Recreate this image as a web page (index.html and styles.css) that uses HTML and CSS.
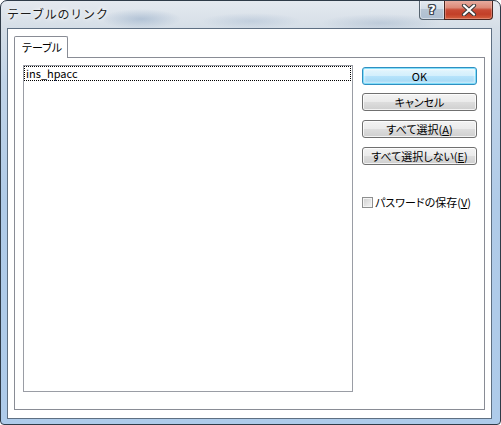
FILE: index.html
```html
<!DOCTYPE html>
<html lang="ja">
<head>
<meta charset="utf-8">
<title>テーブルのリンク</title>
<link rel="stylesheet" href="styles.css">
</head>
<body>
<div class="window">
  <div class="titlebar">
    <span class="title">テーブルのリンク</span>
    <div class="caption-buttons">
      <div class="cap-help"><span class="qmark">?</span></div>
      <div class="cap-close">
        <svg width="16" height="12" viewBox="0 0 16 12">
          <path d="M3 1.5 L13 10.5 M13 1.5 L3 10.5" stroke="#3a3a3a" stroke-width="4.2" stroke-linecap="round" fill="none"/>
          <path d="M3 1.5 L13 10.5 M13 1.5 L3 10.5" stroke="#ffffff" stroke-width="2.2" stroke-linecap="round" fill="none"/>
        </svg>
      </div>
    </div>
  </div>
  <div class="client">
    <div class="tabs"><div class="tab">テーブル</div></div>
    <div class="pane">
      <div class="listbox">
        <div class="item">ins_hpacc</div>
      </div>
      <div class="side">
        <button class="btn default">OK</button>
        <button class="btn cancel">キャンセル</button>
        <button class="btn">すべて選択(<u>A</u>)</button>
        <button class="btn">すべて選択しない(<u>E</u>)</button>
        <label class="check"><span class="box"></span><span class="check-label">パスワードの保存(<u>V</u>)</span></label>
      </div>
    </div>
  </div>
</div>
</body>
</html>
```

FILE: styles.css
```css
html, body {
  margin: 0;
  padding: 0;
  background: #ffffff;
}

body {
  font-family: "Noto Sans CJK JP", "Noto Sans", sans-serif;
  font-size: 11px;
  font-weight: 400;
  font-feature-settings: "palt";
  color: #000;
}

.window {
  width: 501px;
  height: 425px;
  box-sizing: border-box;
  border: 1px solid #2f3b48;
  border-radius: 7px 7px 4px 4px;
  padding: 0 8px 5px 6px;
  display: flex;
  flex-direction: column;
  background:
    radial-gradient(ellipse 40px 10px at 140px 18px, rgba(120,150,185,0.4), rgba(120,150,185,0) 100%),
    radial-gradient(ellipse 50px 8px at 250px 20px, rgba(140,165,195,0.3), rgba(140,165,195,0) 100%),
    radial-gradient(ellipse 60px 9px at 380px 22px, rgba(130,155,185,0.3), rgba(130,155,185,0) 100%),
    linear-gradient(to bottom, #e4e9ef 0px, #d5dee7 27px, #c1d4e8 80px, #b0cbe8 200px, #aecbea 100%);
  overflow: hidden;
}

.titlebar {
  height: 27px;
  display: flex;
  align-items: flex-start;
  justify-content: space-between;
  flex: none;
}

.title {
  padding-top: 5px;
  font-size: 12px;
  font-weight: 400;
  font-feature-settings: normal;
  letter-spacing: 0.8px;
  line-height: 16px;
  color: #1b1b1b;
  text-shadow: 0 0 6px rgba(255,255,255,0.95), 0 0 3px rgba(255,255,255,0.9);
}

.caption-buttons {
  display: flex;
  margin-top: -1px;
  margin-right: -1px;
}

.cap-help {
  width: 25px;
  height: 20px;
  box-sizing: border-box;
  border: 1px solid #56636f;
  border-top: none;
  border-right: none;
  border-radius: 0 0 0 4px;
  background: linear-gradient(to bottom, #e8edf2 0%, #d3dde7 45%, #b7c5d4 50%, #aebed0 100%);
  box-shadow: inset 0 0 0 1px rgba(255,255,255,0.45);
  display: flex;
  align-items: center;
  justify-content: center;
}

.qmark {
  font-family: "DejaVu Sans", sans-serif;
  font-weight: bold;
  font-size: 13px;
  line-height: 13px;
  color: #ffffff;
  text-shadow: -1px 0 #3c4650, 1px 0 #3c4650, 0 -1px #3c4650, 0 1px #3c4650,
    -1px -1px #3c4650, 1px 1px #3c4650, 1px -1px #3c4650, -1px 1px #3c4650;
}

.cap-close {
  width: 49px;
  height: 20px;
  box-sizing: border-box;
  border: 1px solid #4a2620;
  border-top: none;
  border-radius: 0 0 4px 0;
  background: linear-gradient(to bottom, #e9b0a4 0%, #dc8a78 40%, #c84a34 52%, #c23f28 75%, #d4603f 100%);
  box-shadow: inset 0 0 0 1px rgba(255,210,200,0.35);
  display: flex;
  align-items: center;
  justify-content: center;
}

.client {
  flex: 1;
  border: 1px solid #5e6f82;
  background: #ffffff;
  padding: 7px 6px 8px 6px;
  display: flex;
  flex-direction: column;
}

.tabs {
  display: flex;
  height: 21px;
  flex: none;
  position: relative;
  z-index: 1;
}

.tab {
  width: 54px;
  height: 22px;
  box-sizing: border-box;
  border: 1px solid #898c95;
  border-bottom: none;
  background: #ffffff;
  padding: 3px 0 0 7px;
  line-height: 15px;
  border-radius: 2px 2px 0 0;
}

.pane {
  flex: 1;
  border: 1px solid #898c95;
  padding: 7px 7px 17px 8px;
  display: flex;
  gap: 9px;
}

.listbox {
  width: 330px;
  box-sizing: border-box;
  border: 1px solid #9a9da5;
  padding: 0 1px 0 0;
  flex: none;
}

.item {
  height: 15px;
  box-sizing: border-box;
  border: 1px dotted #000;
  padding-left: 1px;
  line-height: 12px;
}

.side {
  width: 115px;
  flex: none;
  display: flex;
  flex-direction: column;
  margin-top: 2px;
}

.btn {
  height: 18px;
  box-sizing: border-box;
  border: 1px solid #707070;
  border-radius: 3px;
  background: linear-gradient(to bottom, #f3f3f3 0%, #ebebeb 48%, #dddddd 52%, #cfcfcf 100%);
  box-shadow: inset 0 0 0 1px rgba(255,255,255,0.75);
  font: inherit;
  line-height: 14px;
  color: #000;
  padding: 0;
  text-align: center;
  margin: 0;
}

.btn + .btn {
  margin-top: 9px;
}

.btn.cancel {
  margin-top: 8px;
}

.btn.default {
  border-color: #2f8fc1;
  background: linear-gradient(to bottom, #e6f6fd 0%, #d3effc 48%, #b6e3fb 52%, #9fd6f3 100%);
  box-shadow: inset 0 0 0 1px rgba(120,220,250,0.9), inset 0 0 2px 2px rgba(255,255,255,0.5);
}

.check {
  display: flex;
  align-items: center;
  margin-top: 31px;
  height: 13px;
}

.box {
  width: 11px;
  height: 11px;
  box-sizing: border-box;
  border: 1px solid #8e8f8f;
  background: linear-gradient(135deg, #cfcfcf 0%, #e6e6e6 60%, #f6f6f6 100%);
  box-shadow: inset 0 0 0 1px #f4f4f4;
  flex: none;
}

.check-label {
  margin-left: 2px;
  line-height: 13px;
  white-space: nowrap;
}

u {
  text-decoration: underline;
  text-underline-offset: 1px;
}
```
